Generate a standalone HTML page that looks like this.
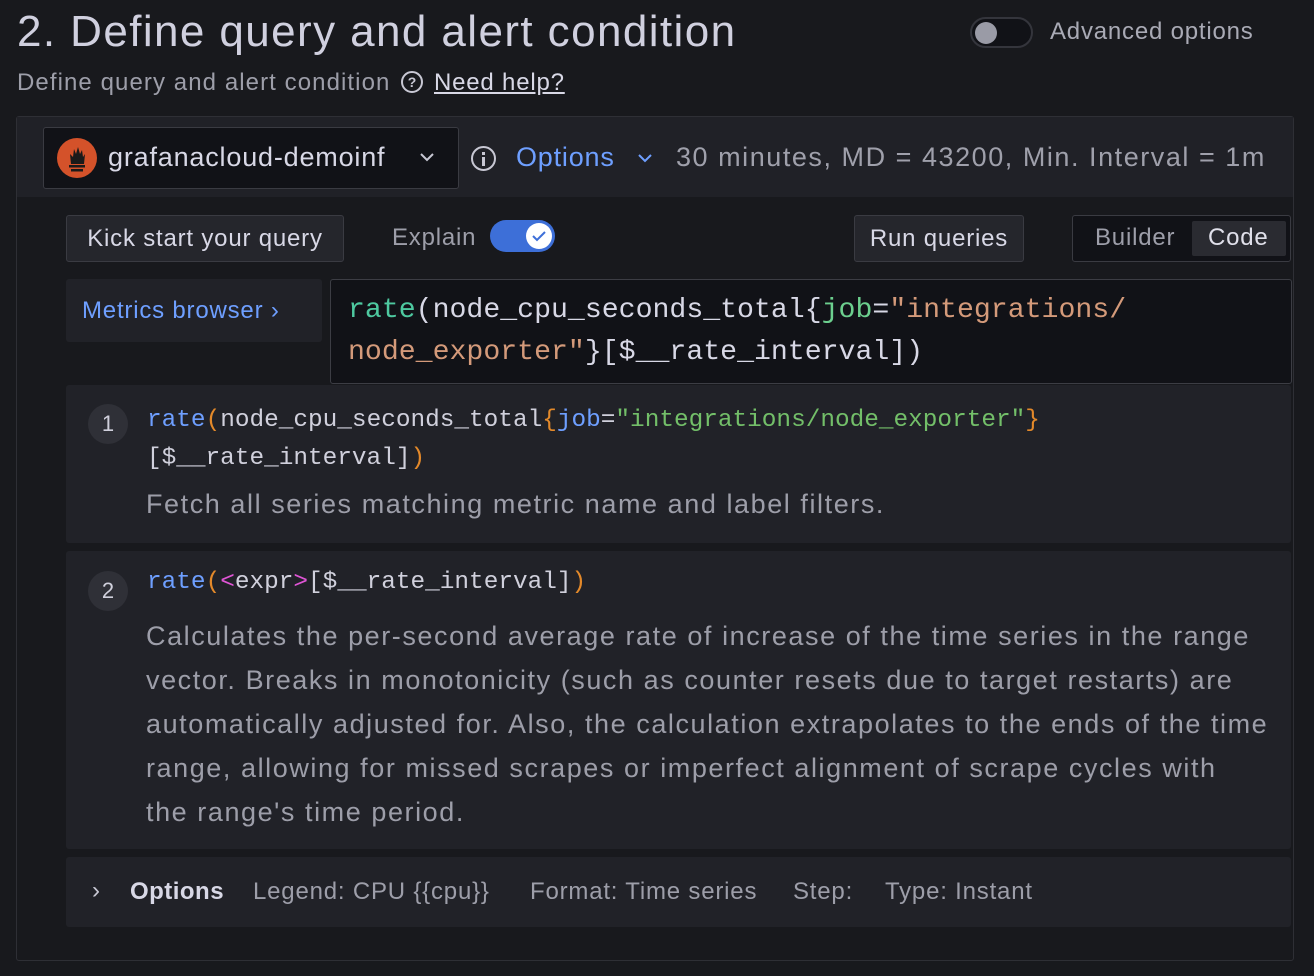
<!DOCTYPE html>
<html><head><meta charset="utf-8"><style>
*{margin:0;padding:0;box-sizing:border-box}
body{width:1314px;height:976px;background:#18191d;font-family:"Liberation Sans",sans-serif;color:#ccccdc;position:relative;overflow:hidden;letter-spacing:0.05em}
.a{position:absolute;white-space:nowrap}
.mono{font-family:"Liberation Mono",monospace;letter-spacing:0}
.btn{position:absolute;background:#25262c;border:1px solid #3a3b42;border-radius:3px;font-size:24px;color:#d8d8e6;display:flex;align-items:center;justify-content:center}
.panel{position:absolute;left:66px;width:1225px;background:#212228;border-radius:3px}
.num{position:absolute;width:40px;height:40px;border-radius:50%;background:#2f3037;color:#d0d0dc;font-size:22px;display:flex;align-items:center;justify-content:center;letter-spacing:0}
.sec{color:#9d9ea9}
</style></head><body>
<div class="a" style="left:17px;top:7px;font-size:44px;color:#d0d0df;letter-spacing:0.032em">2. Define query and alert condition</div>
<div class="a" style="left:970px;top:17px;width:63px;height:31px;border:2px solid #34353c;border-radius:16px;background:#111217"></div>
<div class="a" style="left:975px;top:22px;width:22px;height:22px;border-radius:50%;background:#9a9ba6"></div>
<div class="a sec" style="left:1050px;top:18px;font-size:24px;color:#a9aab5">Advanced options</div>
<div class="a sec" style="left:17px;top:69px;font-size:24px;letter-spacing:0.045em">Define query and alert condition</div>
<div class="a" style="left:401px;top:71px;width:22px;height:22px;border:2px solid #c8c8d4;border-radius:50%;font-size:14px;font-weight:bold;text-align:center;line-height:18px;color:#c8c8d4;letter-spacing:0">?</div>
<div class="a" style="left:434px;top:69px;font-size:24px;text-decoration:underline;color:#d8d8e6">Need help?</div>

<div class="a" style="left:16px;top:116px;width:1278px;height:845px;border:1px solid #2e2f35;border-radius:3px"></div>
<div class="a" style="left:17px;top:117px;width:1276px;height:80px;background:#202127"></div>
<div class="a" style="left:43px;top:127px;width:416px;height:62px;background:#111217;border:1px solid #3a3b42;border-radius:3px"></div>
<div class="a" style="left:57px;top:138px;width:40px;height:40px;border-radius:50%;background:#d4522a"></div>
<svg class="a" style="left:57px;top:138px" width="40" height="40" viewBox="0 0 40 40"><path d="M14 26 L13 16 L16 19 L17 11 L19 16 L21 9 L23 16 L25 12 L26 19 L28 16 L27 26 Z" fill="#1a1a1a"/><rect x="12" y="27" width="16" height="2.5" fill="#1a1a1a"/><rect x="14" y="31" width="12" height="2.5" fill="#1a1a1a"/></svg>
<div class="a" style="left:108px;top:142px;font-size:27px;color:#d8d8e6;letter-spacing:0.03em;width:295px;overflow:hidden">grafanacloud-demoinf</div>
<svg class="a" style="left:418px;top:150px" width="18" height="14"><path d="M3 4 L9 10 L15 4" stroke="#c8c8d4" stroke-width="2" fill="none"/></svg>
<div class="a" style="left:471px;top:146px;width:25px;height:25px;border:2px solid #c8c8d4;border-radius:50%"></div>
<div class="a" style="left:482px;top:152px;width:3px;height:3px;background:#c8c8d4"></div>
<div class="a" style="left:482px;top:157px;width:3px;height:9px;background:#c8c8d4"></div>
<div class="a" style="left:516px;top:142px;font-size:27px;color:#6e9fff">Options</div>
<svg class="a" style="left:636px;top:152px" width="18" height="14"><path d="M3 3 L9 9 L15 3" stroke="#6e9fff" stroke-width="2" fill="none"/></svg>
<div class="a sec" style="left:676px;top:142px;font-size:27px;color:#9fa0ab;letter-spacing:0.057em">30 minutes, MD = 43200, Min. Interval = 1m</div>

<div class="btn" style="left:66px;top:215px;width:278px;height:47px">Kick start your query</div>
<div class="a sec" style="left:392px;top:224px;font-size:24px">Explain</div>
<div class="a" style="left:490px;top:220px;width:65px;height:32px;border-radius:16px;background:#3d6fd8"></div>
<div class="a" style="left:526px;top:223px;width:26px;height:26px;border-radius:50%;background:#fff"></div>
<svg class="a" style="left:526px;top:223px" width="26" height="26"><path d="M7 13 L11 17 L19 9" stroke="#3d6fd8" stroke-width="2" fill="none"/></svg>
<div class="btn" style="left:854px;top:215px;width:170px;height:47px">Run queries</div>
<div class="a" style="left:1072px;top:215px;width:219px;height:47px;border:1px solid #3a3b42;border-radius:3px;background:#111217"></div>
<div class="a sec" style="left:1095px;top:224px;font-size:24px">Builder</div>
<div class="a" style="left:1192px;top:221px;width:94px;height:35px;background:#2a2b31;border-radius:2px"></div>
<div class="a" style="left:1208px;top:224px;font-size:24px;color:#e0e0ea">Code</div>

<div class="a" style="left:66px;top:279px;width:256px;height:63px;background:#212228;border-radius:3px"></div>
<div class="a" style="left:82px;top:297px;font-size:24px;color:#6e9fff">Metrics browser ›</div>
<div class="a" style="left:330px;top:279px;width:962px;height:105px;background:#111217;border:1px solid #3c3d44;border-radius:3px"></div>
<div class="a mono" style="left:348px;top:290px;font-size:28.2px;line-height:42px;color:#d8d8e6"><span style="color:#4ec9a0">rate</span>(node_cpu_seconds_total{<span style="color:#6ccf8e">job</span>=<span style="color:#d49a7a">"integrations/<br>node_exporter"</span>}[$__rate_interval])</div>

<div class="panel" style="top:385px;height:158px"></div>
<div class="num" style="left:88px;top:404px">1</div>
<div class="a mono" style="left:147px;top:402px;font-size:24.4px;line-height:38px;color:#d0d0dc"><span style="color:#6e9fff">rate</span><span style="color:#e3892a">(</span>node_cpu_seconds_total<span style="color:#e3892a">{</span><span style="color:#6e9fff">job</span>=<span style="color:#73bf69">"integrations/node_exporter"</span><span style="color:#e3892a">}</span><br>[$__rate_interval]<span style="color:#e3892a">)</span></div>
<div class="a sec" style="left:146px;top:489px;font-size:27px;letter-spacing:0.058em">Fetch all series matching metric name and label filters.</div>

<div class="panel" style="top:551px;height:298px"></div>
<div class="num" style="left:88px;top:571px">2</div>
<div class="a mono" style="left:147px;top:569px;font-size:24.4px;color:#d0d0dc"><span style="color:#6e9fff">rate</span><span style="color:#e3892a">(</span><span style="color:#e055d6">&lt;</span>expr<span style="color:#e055d6">&gt;</span>[$__rate_interval]<span style="color:#e3892a">)</span></div>
<div class="a sec" style="left:146px;top:614px;font-size:27px;line-height:44px;letter-spacing:0.058em">Calculates the per-second average rate of increase of the time series in the range<br>vector. Breaks in monotonicity (such as counter resets due to target restarts) are<br>automatically adjusted for. Also, the calculation extrapolates to the ends of the time<br>range, allowing for missed scrapes or imperfect alignment of scrape cycles with<br>the range's time period.</div>

<div class="panel" style="top:857px;height:70px"></div>
<div class="a" style="left:92px;top:877px;font-size:24px;color:#c8c8d4">›</div>
<div class="a" style="left:130px;top:878px;font-size:24px;color:#d8d8e6;font-weight:bold;letter-spacing:0.02em">Options</div>
<div class="a sec" style="left:253px;top:878px;font-size:24px">Legend: CPU {{cpu}}</div>
<div class="a sec" style="left:530px;top:878px;font-size:24px">Format: Time series</div>
<div class="a sec" style="left:793px;top:878px;font-size:24px">Step:</div>
<div class="a sec" style="left:885px;top:878px;font-size:24px">Type: Instant</div>
</body></html>
